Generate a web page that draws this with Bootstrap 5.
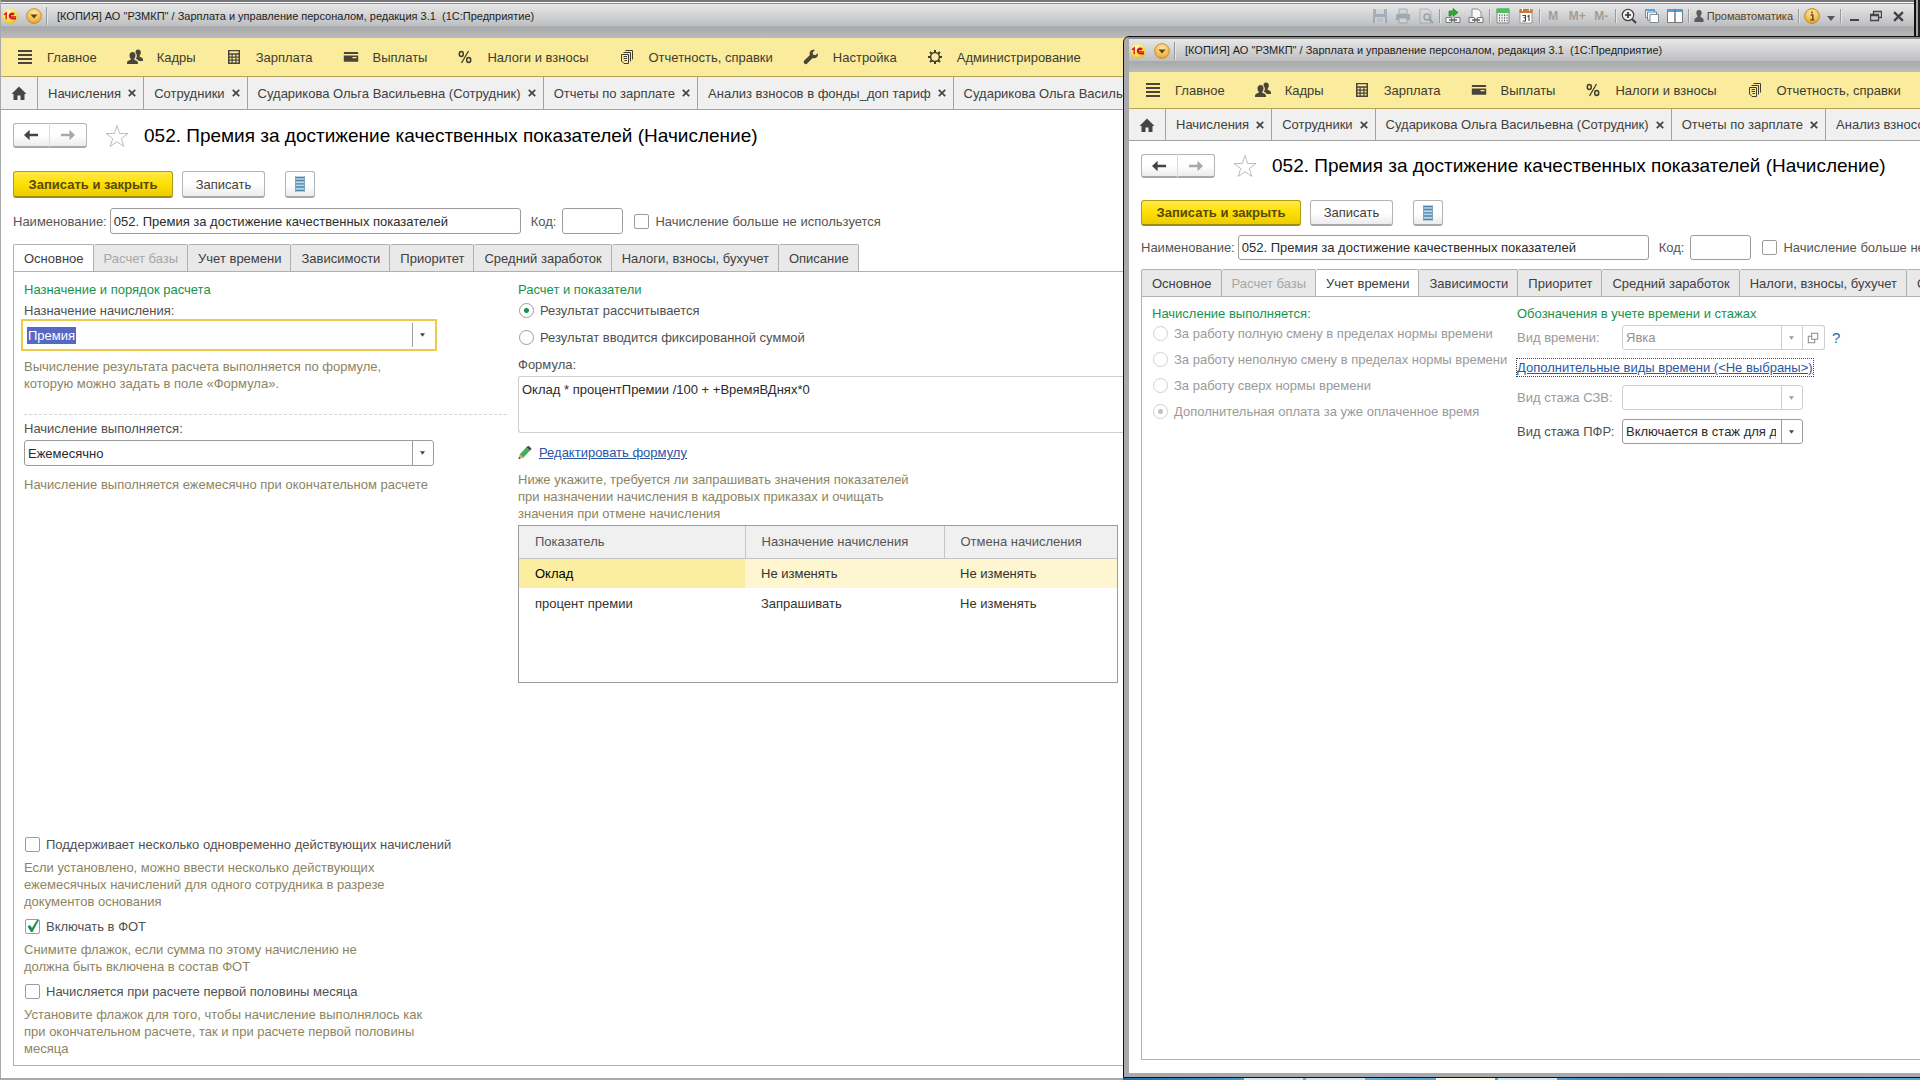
<!DOCTYPE html>
<html lang="ru">
<head>
<meta charset="utf-8">
<meta name="viewport" content="width=device-width, initial-scale=1">
<title>Зарплата и управление персоналом, редакция 3.1</title>
<link href="https://cdn.jsdelivr.net/npm/bootstrap@5.3.0/dist/css/bootstrap.min.css" rel="stylesheet">
<style>
  body { font-family: "Liberation Sans", Arial, sans-serif; font-size: 13px; line-height: 17px; color: #3c3c3c; background: #fff; }
  svg { display: block; flex: none; }

  /* Desktop and windows */
  .desk { min-height: 100vh; background: #77777b; overflow: hidden; }
  .win { --title-h: 34px; --menu-h: 39px; --tabs-h: 33px; --top-gap: 13px; --nav-h: 25px; --nav-gap: 23px; --btn-h: 27px; --field-h: 26px; --ftab-h: 28px; --field-gap: 10px; background: #fff; }
  .win-main { margin-right: 5px; min-height: 100vh; border: solid #a9a9a9; border-width: 0 0 2px 1px; }
  .win-front { --title-h: 33px; --menu-h: 37px; --tabs-h: 32px; --top-gap: 13px; --nav-h: 24px; --nav-gap: 22px; --btn-h: 26px; --field-h: 25px; --ftab-h: 28px; --field-gap: 9px; left: 1124px; top: 37px; right: 0; bottom: 3px; border: solid #a9a9ab; border-width: 2px 0 4px 5px; border-top-color: #8b8b8d; border-top-left-radius: 5px; outline: 1px solid #111; overflow: hidden; }
  .desk-rim { height: 4px; background: linear-gradient(#77777b 2px, #fff 2px, #fff 3px, #8b8b8d 3px); }
  .task-strip { left: 1123px; right: 0; bottom: 0; height: 3px; padding-left: 121px; gap: 3px; background: linear-gradient(90deg, #1f6da5, #6fb2d8 25%, #3f8cc0 65%, #5da5d0); }
  .task-strip i { width: 59px; background: linear-gradient(#333 1px, #cfe8f5 1px); }
  .task-strip i + i + i { margin-left: 68px; background: linear-gradient(#222 1px, #fdf9e0 1px); }
  .task-strip i + i + i + i { margin-left: 0; background: linear-gradient(#333 1px, #cfe8f5 1px); }
  .corner { right: 0; top: 0; width: 6px; height: 37px; background: linear-gradient(90deg, #111 2px, #a5a5a8 2px, #a5a5a8 4px, #222 4px); }

  .titlebar { height: var(--title-h); padding: 0 11px 10px 1px; font-size: 12px; color: #1d1d1d; background: linear-gradient(#e8e8e8, #bdbec0 22px, #adaeb0 22px, #a9aaac 70%, #bcbcbe); white-space: nowrap; }
  .titlebar .caption { font-size: 11px; margin-left: 10px; }
  .orb { width: 16px; height: 16px; border: 0; padding: 0; background: none; }
  .vline { width: 1px; height: 18px; background: #9b9b9d; box-shadow: 1px 0 #e4e4e4; }
  .tools { gap: 7px; }
  .tools .vline { margin: 0 -2px; height: 14px; }
  .tools button { border: 0; padding: 0; background: none; line-height: 16px; color: #4a4a4a; }
  .tools .faded { opacity: .55; }
  .tools .memo { width: 17px; font-size: 12px; font-weight: 700; color: #a99b90; }
  .tools .who { gap: 3px; font-size: 11px; color: #5a431f; }

  .menu { height: var(--menu-h); padding-left: 16px; gap: 30px; background: #faec9c; border-bottom: 1px solid #b3a455; }
  .menu a { gap: 14px; color: #403c30; text-decoration: none; white-space: nowrap; }

  .opened { height: var(--tabs-h); background: #f0f0f0; border-bottom: 1px solid #a3a3a3; overflow: hidden; }
  .opened > div { padding: 0 7px 0 10px; gap: 7px; border-right: 1px solid #a3a3a3; white-space: nowrap; flex: none; }
  .opened > .home { padding: 0 10px; }
  .opened a { color: #404040; text-decoration: none; }
  .opened button { border: 0; padding: 0; background: none; }

  .sheet { padding: var(--top-gap) 0 12px 12px; }
  .win-front .sheet { padding-bottom: 13px; }
  .navpair button, .act { border: 1px solid #b4b4b4; border-bottom: 2px solid #a8a8a8; border-radius: 3px; background: linear-gradient(#fff 50%, #ececec); color: #404040; padding: 0; }
  .navpair button { width: 37px; height: var(--nav-h); }
  .navpair button:first-child { border-radius: 3px 0 0 3px; border-right-color: #dcdcdc; }
  .navpair button:last-child { border-radius: 0 3px 3px 0; border-left: 0; }
  .sheet h1 { font-size: 19px; line-height: var(--nav-h); color: #000; font-weight: 400; white-space: nowrap; }
  .star { margin: 0 15px 0 18px; border: 0; padding: 0; background: none; }
  .acts { margin-top: var(--nav-gap); gap: 9px; }
  .act { height: var(--btn-h); width: 83px; }
  .act-main { width: 160px; font-weight: 700; color: #57490b; background: linear-gradient(#ffe94a, #ffe000 50%, #eccb00); border-color: #b39c15; border-bottom-color: #a08b12; }
  .act-list { width: 30px; margin-left: 11px; }

  .fields { margin: var(--field-gap) 0; height: var(--field-h); white-space: nowrap; }
  .box { border: 1px solid #9c9c9c; border-radius: 3px; height: var(--field-h); padding: 0 3px; color: #2b2b2b; background: #fff; flex: none; }
  .box-name { width: 411px; margin: 0 10px 0 3px; }
  .box-code { width: 61px; margin: 0 10px 0 6px; }
  .fields > label { color: #555; }

  .tick, .dot { appearance: none; width: 15px; height: 15px; margin: 0 6px 0 1px; border: 1px solid #9c9c9c; background: #fff; flex: none; }
  .tick { border-radius: 2px; }
  .dot { border-radius: 50%; }
  .dot:checked { background: radial-gradient(circle, #159250 2px, #fff 3px); }
  .dot:disabled { border-color: #d0d0d0; }
  .dot:disabled:checked { background: radial-gradient(circle, #c0c0c0 2px, #fff 3px); }
  .tick:checked { background: url("data:image/svg+xml,%3Csvg xmlns='http://www.w3.org/2000/svg' viewBox='0 0 13 13'%3E%3Cpath d='M1.500 6.500 4 5 6 8 11 0h2L6.500 12H5z' fill='%23159250'/%3E%3C/svg%3E") center / 13px 13px no-repeat; }
  .pick { height: 16px; color: #505050; white-space: nowrap; }
  .pick.off { color: #9a9a9a; }

  .formtabs { height: var(--ftab-h); margin-bottom: -1px; }
  .formtabs button { border: 1px solid #b0b0b0; border-left-width: 0; background: #e9e9e9; padding: 0 9px 0 10px; color: #404040; white-space: nowrap; border-radius: 2px 2px 0 0; flex: none; }
  .formtabs button:first-child { border-left-width: 1px; }
  .formtabs button:disabled { color: #a6a6a6; }
  .formtabs .now { background: #fff; border-bottom-color: #fff; }
  .pane { border: solid #b0b0b0; border-width: 1px 0 1px 1px; padding: 9px 0 8px 10px; }
  .win-front .pane { padding-top: 8px; }

  .sect { font-size: 13px; line-height: 17px; color: #16924f; font-weight: 400; margin: 0; }
  .tip { color: #8d8462; margin: 7px 0 0; }
  .cap { color: #505050; display: block; }
  .col-a { width: 483px; margin-right: 11px; flex: none; }
  .col-b { min-width: 0; }
  .col-time { width: 365px; flex: none; }
  .col-time .pick { margin-bottom: 10px; }
  .col-time .sect, .col-marks .sect { margin-bottom: 3px; }
  .col-marks .lnk { margin: 9px 0; white-space: nowrap; }
  .col-marks .side-row + .side-row { margin-top: 9px; }

  .combo { appearance: none; display: block; height: var(--field-h); border: 1px solid #9c9c9c; border-radius: 3px; padding: 0 26px 0 3px; color: #2b2b2b;
    background: url("data:image/svg+xml,%3Csvg xmlns='http://www.w3.org/2000/svg' viewBox='0 0 6 4'%3E%3Cpath d='M0 0h6L3 4z' fill='%23444'/%3E%3C/svg%3E") right 8px center / 5px 4px no-repeat, linear-gradient(#9c9c9c, #9c9c9c) right 20px center / 1px 100% no-repeat #fff; }
  .combo-wide { width: 410px; margin-top: 3px; }
  .combo-wide + .tip { margin-top: 10px; }
  .combo-lit { width: 416px; height: 32px; margin-left: -3px; border: 2px solid #eccb4b; border-radius: 0; color: #fff; padding-left: 5px;
    background: url("data:image/svg+xml,%3Csvg xmlns='http://www.w3.org/2000/svg' viewBox='0 0 6 4'%3E%3Cpath d='M0 0h6L3 4z' fill='%23444'/%3E%3C/svg%3E") right 10px center / 5px 4px no-repeat, linear-gradient(#9c9c9c, #9c9c9c) right 22px center / 1px 24px no-repeat, linear-gradient(#5468c4, #5468c4) 4px center / 49px 17px no-repeat #fff; }
  .combo-side { width: 181px; }
  .combo:disabled { border-color: #cfcfcf; color: #8f8f8f; opacity: 1;
    background: url("data:image/svg+xml,%3Csvg xmlns='http://www.w3.org/2000/svg' viewBox='0 0 6 4'%3E%3Cpath d='M0 0h6L3 4z' fill='%23999'/%3E%3C/svg%3E") right 8px center / 5px 4px no-repeat, linear-gradient(#cfcfcf, #cfcfcf) right 20px center / 1px 100% no-repeat #fff; }
  .combo-joined { border-radius: 3px 0 0 3px; }
  .opener { width: 22px; height: var(--field-h); border: 1px solid #cfcfcf; border-left: 0; border-radius: 0 3px 3px 0; background: #fff; padding: 0 4px; }
  .side-row { height: var(--field-h); }
  .side-row label { width: 105px; color: #505050; }
  .side-row label.off { color: #9a9a9a; }
  .help { margin-left: 7px; font-size: 15px; color: #1173b5; text-decoration: none; }
  .dash { height: 1px; margin: 22px 0 5px; background: repeating-linear-gradient(90deg, #d5d5d5 0 3px, transparent 3px 5px); }
  .spaced { margin: 11px 0; }
  .formula { display: block; width: 100%; height: 57px; margin-top: 3px; border: 1px solid #cfcfcf; border-right: 0; border-radius: 3px 0 0 3px; resize: none; padding: 4px 3px; color: #2b2b2b; }
  .edit-row { margin: 11px 0 10px; gap: 7px; }
  .edit-row + .tip { margin-top: 0; }
  .lnk { color: #2a56a5; }
  .lnk-focus { outline: 1px dotted #444; }

  .grid-frame { width: 600px; height: 158px; border: 1px solid #9c9c9c; margin-top: 3px; }
  .grid-frame table { width: 100%; table-layout: fixed; }
  .grid-frame th { height: 32px; padding: 0 0 0 16px; font-weight: 400; color: #555; background: #f0f0f0; border-bottom: 1px solid #c4c4c4; border-right: 1px solid #c4c4c4; }
  .grid-frame th:last-child { border-right: 0; }
  .grid-frame td { height: 30px; padding: 0 0 0 16px; color: #333; }
  .grid-frame .sel td { background: #fdf6d0; }
  .grid-frame .sel td:first-child { background: #fbeea0; color: #000; }
</style>
</head>
<body>
<svg width="0" height="0" class="position-absolute" aria-hidden="true">
  <defs>
    <radialGradient id="gy" cx=".4" cy=".3" r=".8"><stop offset="0" stop-color="#fffbd0"/><stop offset=".6" stop-color="#fbe04a"/><stop offset="1" stop-color="#e0b020"/></radialGradient>
    <radialGradient id="go" cx=".5" cy=".3" r=".8"><stop offset="0" stop-color="#ffe9a8"/><stop offset=".7" stop-color="#f3b340"/><stop offset="1" stop-color="#c98a20"/></radialGradient>
    <symbol id="i-1c" viewBox="0 0 16 16"><circle cx="8" cy="8" r="7.600" fill="url(#gy)"/><path d="M2 6.800 4.200 5v6.200M12.300 6.200A2.800 2.800 0 1 0 9.800 10.800H14M11.300 7.200A1.400 1.400 0 1 0 9.900 9H14" fill="none" stroke="#d01818" stroke-width="1.400"/></symbol>
    <symbol id="i-drop" viewBox="0 0 16 16"><circle cx="8" cy="8" r="7.400" fill="url(#go)" stroke="#b98632" stroke-width=".8"/><path d="M4.500 6.500h7L8 10.500z" fill="#5b4212"/></symbol>
    <symbol id="i-main" viewBox="0 0 16 16"><path d="M1 1h14v2H1zM1 5h14v2H1zM1 9h14v2H1zM1 13h14v2H1z"/></symbol>
    <symbol id="i-people" viewBox="0 0 16 16"><path d="M11 .5c1.800 0 2.800 1.300 2.800 3 0 1.500-.6 2.400-1.100 3v1.300c1.600.6 3.300 1 3.300 3V12h-4.300c-.5-1.200-1.700-1.700-2.900-2.200 1.300-1.300 1.600-4.600-.3-6.100C8.300 1.800 9.200.5 11 .5z"/><path d="M5.500 3c2 0 3 1.400 3 3.200S7.800 9.200 7.300 9.700v1.100c1.600.7 3.400 1 3.700 3V15H0v-1.200c.2-2 2-2.300 3.700-3V9.700C3.200 9.200 2.500 8 2.500 6.200 2.500 4.400 3.500 3 5.500 3z"/></symbol>
    <symbol id="i-calc" viewBox="0 0 16 16"><path fill-rule="evenodd" d="M2 1h12v14H2zM3.500 2.300v2h9v-2zM3.500 5.700v1.800h2V5.700zM6.700 5.700v1.800h2.600V5.700zM10.500 5.700v1.800h2V5.700zM3.500 8.700v1.800h2V8.700zM6.700 8.700v1.800h2.600V8.700zM10.500 8.700v1.800h2V8.700zM3.500 11.800v1.800h2v-1.800zM6.700 11.800v1.800h2.600v-1.800zM10.500 11.800v1.800h2v-1.800z"/></symbol>
    <symbol id="i-card" viewBox="0 0 16 16"><path fill-rule="evenodd" d="M1.500 3h13l.7.700V5H.8V3.700zM.8 6.500h14.400v6.300H.8zM9.500 8v1.200h4V8z"/></symbol>
    <symbol id="i-pct" viewBox="0 0 16 16"><path d="M11.500 2 4.500 14" fill="none" stroke="currentColor" stroke-width="1.300"/><ellipse cx="4.300" cy="5" rx="2" ry="2.500" fill="none" stroke="currentColor" stroke-width="1.500"/><ellipse cx="11.700" cy="11" rx="2" ry="2.500" fill="none" stroke="currentColor" stroke-width="1.500"/></symbol>
    <symbol id="i-docs" viewBox="0 0 16 16"><path d="M2.500 5.500h7v9H5l-2.500-2.500zM4.500 3.500h7v9M6.500 1.500h7v9M4.500 7.500H8M4.500 9.500H8M5.500 11.500H8" fill="none" stroke="currentColor"/></symbol>
    <symbol id="i-wrench" viewBox="0 0 16 16"><path d="M14.800 4.200 12.300 6.200 10 5.500l-.3-2.300L12 1C9.500 0 6.500 1.500 6.600 4.500c0 .7.200 1.200.3 1.600L1.300 11.600c-1 1-.6 2.300 0 3 .8.700 2 .8 2.900-.1l5.500-5.400c2.800 1 6-1.400 5.100-4.900z"/></symbol>
    <symbol id="i-gear" viewBox="0 0 16 16"><circle cx="8" cy="8" r="4.400" fill="none" stroke="currentColor" stroke-width="1.500"/><path d="M8 1v2.500M8 12.500V15M1 8h2.500M12.500 8H15M3 3l1.800 1.800M11.200 11.200 13 13M3 13l1.800-1.800M11.200 4.800 13 3" stroke="currentColor" stroke-width="2"/></symbol>
    <symbol id="i-home" viewBox="0 0 16 16"><path d="M8 1.500 15.500 9h-2v6h-4v-4.500h-3V15h-4V9h-2z"/></symbol>
    <symbol id="i-x" viewBox="0 0 8 8"><path d="m.8.8 6.400 6.400M7.200.8.8 7.200" stroke="#444" stroke-width="1.700"/></symbol>
    <symbol id="i-left" viewBox="0 0 16 12"><path d="M0 6 6 .5V4.700h9v2.600H6v4.200z"/></symbol>
    <symbol id="i-right" viewBox="0 0 16 12"><path d="M15 6 9 .5V4.700H0v2.600h9v4.200z"/></symbol>
    <symbol id="i-star" viewBox="0 0 24 24"><path d="m12 1.500 2.700 8H23l-6.700 5 2.500 8L12 17.700l-6.800 4.800 2.500-8L1 9.500h8.300z" fill="#fff" stroke="#bdbdbd"/></symbol>
    <symbol id="i-list" viewBox="0 0 12 16"><path d="M1 .5h10v15H1z" fill="#b8d5e8"/><path d="M1 1.500h10M1 4.500h10M1 7.800h10M1 11h10M1 14.500h10" stroke="#4f82a8" stroke-width="1.300"/><path d="M1.500 .5v15M10.500 .5v15" stroke="#7ea4c0"/></symbol>
    <symbol id="i-pencil" viewBox="0 0 16 16"><path d="M.5 15.500 2 10l4 4z" fill="#d9a95a"/><path d="M2 10 9.500 2l4 4L6 14z" fill="#4bab5a"/><path d="M9.500 2 11 .8q1-.7 1.800 0L15 3q.8.800 0 1.700L13.500 6z" fill="#4a4a55"/><path d="m.5 15.500.7-2.500 1.800 1.800z" fill="#443311"/></symbol>
    <symbol id="i-open" viewBox="0 0 14 14"><path d="M5.500 1.500h7v7h-7zM5 5H1.500v7.500H9V9" fill="none" stroke="#8c8c8c" stroke-width="1.200"/></symbol>
    <symbol id="t-save" viewBox="0 0 16 16"><path d="M1 1h14v14H1z" fill="#7d92a3"/><path d="M4 1h8v5H4zM3 9h10v6H3z" fill="#cbd2d8"/><path d="M5 11h6M5 13h6" stroke="#8fa0ae"/></symbol>
    <symbol id="t-print" viewBox="0 0 16 16"><path d="M4 1h8v5H4z" fill="#cfd4d8" stroke="#7b8a96"/><path d="M1 6h14v6H1z" fill="#7b8a96"/><path d="M4 10h8v5H4z" fill="#dadee1" stroke="#7b8a96"/></symbol>
    <symbol id="t-view" viewBox="0 0 16 16"><path d="M2 1h8l3 3v11H2z" fill="#d3d7da" stroke="#88959e"/><circle cx="9" cy="9" r="3" fill="#c2d0da" stroke="#6a7c8a" stroke-width="1.500"/><path d="m11 11 4 4" stroke="#6a7c8a" stroke-width="2"/></symbol>
    <symbol id="t-link" viewBox="0 0 16 16"><path d="M1 9.500h5.500v5H1zM9.500 9.500H15v5H9.500z" fill="#f5f5f5" stroke="#7b7b7b"/><path d="M4 12h8" stroke="#666" stroke-width="1.500"/><path d="M4 3h4V.5l5 4-5 4V6.200H6V8H4z" fill="#2cab35" stroke="#14761c" stroke-width=".6"/></symbol>
    <symbol id="t-page" viewBox="0 0 16 16"><path d="M4 1h6l3 3v7H4z" fill="#fafafa" stroke="#8a8a8a"/><path d="M1 9.500h5.500v5H1zM9.500 9.500H15v5H9.500z" fill="#f5f5f5" stroke="#7b7b7b"/><path d="M4 12h8" stroke="#666" stroke-width="1.500"/></symbol>
    <symbol id="t-calc" viewBox="0 0 16 16"><path d="M2 1h12v14H2z" fill="#f1f1f1" stroke="#888"/><path d="M1.500 .5h13V5h-13z" fill="#4cc05e"/><path d="M4.500 6.500v8M7 6.500v8M9.500 6.500v8M12 6.500v8" stroke="#666" stroke-dasharray="1.600 1"/></symbol>
    <symbol id="t-cal" viewBox="0 0 16 16"><path d="M2 2h12v13H2z" fill="#fff" stroke="#999"/><path d="M1.500 1h13v4h-13z" fill="#c67a41"/><path d="M4.500 0v3M11.500 0v3" stroke="#fff"/><path d="M4.500 7.500h3v2.300h-2 2V13h-3M9.500 8.500 11 7.500V13" fill="none" stroke="#444" stroke-width="1.100"/></symbol>
    <symbol id="t-zoom" viewBox="0 0 16 16"><circle cx="7" cy="7" r="5.700" fill="#eee" stroke="#444" stroke-width="1.200"/><path d="M4 7h6M7 4v6" stroke="#333" stroke-width="1.700"/><path d="m11 11 4 4" stroke="#444" stroke-width="2.200"/></symbol>
    <symbol id="t-wins" viewBox="0 0 16 16"><path d="M1.500 1.500h9v8h-9z" fill="#f8f8f8" stroke="#4d90c4"/><path d="M3.500 4h9v8h-9z" fill="#f8f8f8" stroke="#4d90c4"/><path d="M6 6.500h8.500v8H6z" fill="#fff" stroke="#888"/><path d="M1 2h10" stroke="#58a2d8" stroke-width="2"/></symbol>
    <symbol id="t-cols" viewBox="0 0 16 16"><path d="M.5 1.500h15v13H.5z" fill="#fff" stroke="#777"/><path d="M.5 2.500h15" stroke="#4aa0e0" stroke-width="3"/><path d="M8 1v14" stroke="#777" stroke-width="1.500"/></symbol>
    <symbol id="t-man" viewBox="0 0 10 14"><path d="M5 1C7.500 1 8 3 7.500 5L6.300 7.500 9.500 10v3H.5v-3l3.200-2.500L2.500 5C2 3 2.500 1 5 1z" fill="#5b5b5b"/></symbol>
    <symbol id="t-info" viewBox="0 0 16 16"><circle cx="8" cy="8" r="7.400" fill="url(#go)" stroke="#c08a28"/><path d="M6.500 7h2.300v5M6.300 12h4M8 3.500v2" fill="none" stroke="#6b5520" stroke-width="1.700"/></symbol>
  </defs>
</svg>

<div class="desk position-relative">
  <main class="win win-main d-flex flex-column">
    <div class="desk-rim"></div>
    <header class="titlebar d-flex align-items-center">
      <button class="orb" aria-label="1С"><svg width="16" height="16"><use href="#i-1c"/></svg></button>
      <button class="orb ms-2" aria-label="Сервис"><svg width="16" height="16"><use href="#i-drop"/></svg></button>
      <span class="vline ms-1"></span>
      <span class="caption">[КОПИЯ] АО "РЗМКП" / Зарплата и управление персоналом, редакция 3.1&nbsp; (1С:Предприятие)</span>
      <div class="tools d-flex align-items-center ms-auto">
        <button class="faded" aria-label="Сохранить"><svg width="16" height="16"><use href="#t-save"/></svg></button>
        <button class="faded" aria-label="Печать"><svg width="16" height="16"><use href="#t-print"/></svg></button>
        <button class="faded" aria-label="Просмотр"><svg width="16" height="16"><use href="#t-view"/></svg></button>
        <span class="vline"></span>
        <button aria-label="Получить ссылку"><svg width="16" height="16"><use href="#t-link"/></svg></button>
        <button aria-label="Перейти по ссылке"><svg width="16" height="16"><use href="#t-page"/></svg></button>
        <span class="vline"></span>
        <button aria-label="Калькулятор"><svg width="16" height="16"><use href="#t-calc"/></svg></button>
        <button aria-label="Календарь"><svg width="16" height="16"><use href="#t-cal"/></svg></button>
        <span class="vline"></span>
        <button class="memo">M</button>
        <button class="memo">M+</button>
        <button class="memo">M-</button>
        <span class="vline"></span>
        <button aria-label="Масштаб"><svg width="16" height="16"><use href="#t-zoom"/></svg></button>
        <button aria-label="Окна"><svg width="16" height="16"><use href="#t-wins"/></svg></button>
        <button aria-label="Панели"><svg width="16" height="16"><use href="#t-cols"/></svg></button>
        <span class="vline"></span>
        <button class="who d-flex align-items-center"><svg width="10" height="14"><use href="#t-man"/></svg>Промавтоматика</button>
        <span class="vline"></span>
        <button aria-label="Справка"><svg width="16" height="16"><use href="#t-info"/></svg></button>
        <button aria-label="Ещё"><svg width="8" height="12" viewBox="0 0 8 12"><path d="M0 6h8L4 11z" fill="#555"/></svg></button>
        <span class="vline"></span>
        <button class="ms-1" aria-label="Свернуть"><svg width="9" height="12" viewBox="0 0 9 12"><path d="M0 9h9v2H0z" fill="#444"/></svg></button>
        <button class="ms-1" aria-label="Восстановить"><svg width="12" height="12" viewBox="0 0 12 12"><path d="M3.500 4V1.500h8v6H9M.5 4.500h8v6h-8zM.5 5.500h8" fill="none" stroke="#444" stroke-width="1.300"/></svg></button>
        <button class="ms-1" aria-label="Закрыть"><svg width="11" height="11"><use href="#i-x"/></svg></button>
      </div>
    </header>

    <nav class="menu d-flex align-items-center">
      <a href="#" class="d-flex align-items-center"><svg width="16" height="16" fill="#4a4538"><use href="#i-main"/></svg>Главное</a>
      <a href="#" class="d-flex align-items-center"><svg width="16" height="16" fill="#4a4538"><use href="#i-people"/></svg>Кадры</a>
      <a href="#" class="d-flex align-items-center"><svg width="16" height="16" fill="#4a4538"><use href="#i-calc"/></svg>Зарплата</a>
      <a href="#" class="d-flex align-items-center"><svg width="16" height="16" fill="#4a4538"><use href="#i-card"/></svg>Выплаты</a>
      <a href="#" class="d-flex align-items-center"><svg width="16" height="16"><use href="#i-pct"/></svg>Налоги и взносы</a>
      <a href="#" class="d-flex align-items-center"><svg width="16" height="16"><use href="#i-docs"/></svg>Отчетность, справки</a>
      <a href="#" class="d-flex align-items-center"><svg width="16" height="16" fill="#4a4538"><use href="#i-wrench"/></svg>Настройка</a>
      <a href="#" class="d-flex align-items-center"><svg width="16" height="16"><use href="#i-gear"/></svg>Администрирование</a>
    </nav>

    <div class="opened d-flex">
      <div class="home d-flex align-items-center"><a href="#" aria-label="Начальная страница"><svg width="16" height="16" fill="#444"><use href="#i-home"/></svg></a></div>
      <div class="d-flex align-items-center"><a href="#">Начисления</a><button aria-label="Закрыть"><svg width="8" height="8"><use href="#i-x"/></svg></button></div>
      <div class="d-flex align-items-center"><a href="#">Сотрудники</a><button aria-label="Закрыть"><svg width="8" height="8"><use href="#i-x"/></svg></button></div>
      <div class="d-flex align-items-center"><a href="#">Сударикова Ольга Васильевна (Сотрудник)</a><button aria-label="Закрыть"><svg width="8" height="8"><use href="#i-x"/></svg></button></div>
      <div class="d-flex align-items-center"><a href="#">Отчеты по зарплате</a><button aria-label="Закрыть"><svg width="8" height="8"><use href="#i-x"/></svg></button></div>
      <div class="d-flex align-items-center"><a href="#">Анализ взносов в фонды_доп тариф</a><button aria-label="Закрыть"><svg width="8" height="8"><use href="#i-x"/></svg></button></div>
      <div class="d-flex align-items-center"><a href="#">Сударикова Ольга Васильевна</a></div>
    </div>

    <section class="sheet d-flex flex-column flex-grow-1">
      <div class="d-flex align-items-center">
        <div class="navpair d-flex">
          <button aria-label="Назад"><svg class="mx-auto" width="15" height="12" fill="#444"><use href="#i-left"/></svg></button>
          <button aria-label="Вперед"><svg class="mx-auto" width="15" height="12" fill="#a8a8a8"><use href="#i-right"/></svg></button>
        </div>
        <button class="star" aria-label="В избранное"><svg width="24" height="24"><use href="#i-star"/></svg></button>
        <h1 class="m-0">052. Премия за достижение качественных показателей (Начисление)</h1>
      </div>
      <div class="acts d-flex">
        <button class="act act-main">Записать и закрыть</button>
        <button class="act">Записать</button>
        <button class="act act-list" aria-label="Список"><svg class="mx-auto" width="12" height="16"><use href="#i-list"/></svg></button>
      </div>
      <div class="fields d-flex align-items-center">
        <label for="name1">Наименование:</label>
        <input class="box box-name" id="name1" type="text" value="052. Премия за достижение качественных показателей">
        <label for="code1">Код:</label>
        <input class="box box-code" id="code1" type="text">
        <input class="tick" id="unused1" type="checkbox"><label for="unused1">Начисление больше не используется</label>
      </div>
      <div class="formtabs d-flex">
        <button class="now">Основное</button><button disabled>Расчет базы</button><button>Учет времени</button><button>Зависимости</button><button>Приоритет</button><button>Средний заработок</button><button>Налоги, взносы, бухучет</button><button>Описание</button>
      </div>
      <div class="pane d-flex flex-grow-1">
        <div class="col-a d-flex flex-column">
          <h2 class="sect">Назначение и порядок расчета</h2>
          <label class="cap mt-1" for="purpose">Назначение начисления:</label>
          <select class="combo combo-lit" id="purpose"><option>Премия</option></select>
          <p class="tip">Вычисление результата расчета выполняется по формуле,<br>которую можно задать в поле «Формула».</p>
          <div class="dash"></div>
          <label class="cap" for="period">Начисление выполняется:</label>
          <select class="combo combo-wide" id="period"><option>Ежемесячно</option></select>
          <p class="tip">Начисление выполняется ежемесячно при окончательном расчете</p>
          <div class="mt-auto">
            <div class="pick d-flex align-items-center"><input class="tick" id="multi" type="checkbox"><label for="multi">Поддерживает несколько одновременно действующих начислений</label></div>
            <p class="tip">Если установлено, можно ввести несколько действующих<br>ежемесячных начислений для одного сотрудника в разрезе<br>документов основания</p>
            <div class="pick d-flex align-items-center mt-2"><input class="tick" id="fot" type="checkbox" checked><label for="fot">Включать в ФОТ</label></div>
            <p class="tip">Снимите флажок, если сумма по этому начислению не<br>должна быть включена в состав ФОТ</p>
            <div class="pick d-flex align-items-center mt-2"><input class="tick" id="half" type="checkbox"><label for="half">Начисляется при расчете первой половины месяца</label></div>
            <p class="tip">Установите флажок для того, чтобы начисление выполнялось как<br>при окончательном расчете, так и при расчете первой половины<br>месяца</p>
          </div>
        </div>
        <div class="col-b flex-grow-1">
          <h2 class="sect">Расчет и показатели</h2>
          <div class="pick d-flex align-items-center mt-1"><input class="dot" id="calc" name="res" type="radio" checked><label for="calc">Результат рассчитывается</label></div>
          <div class="pick spaced d-flex align-items-center"><input class="dot" id="fixed" name="res" type="radio"><label for="fixed">Результат вводится фиксированной суммой</label></div>
          <label class="cap" for="formula">Формула:</label>
          <textarea class="formula" id="formula">Оклад * процентПремии /100 + +ВремяВДнях*0</textarea>
          <div class="edit-row d-flex align-items-center"><svg width="14" height="15"><use href="#i-pencil"/></svg><a class="lnk" href="#">Редактировать формулу</a></div>
          <p class="tip">Ниже укажите, требуется ли запрашивать значения показателей<br>при назначении начисления в кадровых приказах и очищать<br>значения при отмене начисления</p>
          <div class="grid-frame">
            <table>
              <colgroup><col style="width:226px"><col style="width:199px"><col></colgroup>
              <thead><tr><th>Показатель</th><th>Назначение начисления</th><th>Отмена начисления</th></tr></thead>
              <tbody>
                <tr class="sel"><td>Оклад</td><td>Не изменять</td><td>Не изменять</td></tr>
                <tr><td>процент премии</td><td>Запрашивать</td><td>Не изменять</td></tr>
              </tbody>
            </table>
          </div>
        </div>
      </div>
    </section>
  </main>

  <div class="corner position-absolute"></div>
  <div class="task-strip position-absolute d-flex"><i></i><i></i><i></i><i></i></div>

  <aside class="win win-front position-absolute d-flex flex-column">
    <header class="titlebar d-flex align-items-center">
      <button class="orb" aria-label="1С"><svg width="16" height="16"><use href="#i-1c"/></svg></button>
      <button class="orb ms-2" aria-label="Сервис"><svg width="16" height="16"><use href="#i-drop"/></svg></button>
      <span class="vline ms-1"></span>
      <span class="caption">[КОПИЯ] АО "РЗМКП" / Зарплата и управление персоналом, редакция 3.1&nbsp; (1С:Предприятие)</span>
    </header>

    <nav class="menu d-flex align-items-center">
      <a href="#" class="d-flex align-items-center"><svg width="16" height="16" fill="#4a4538"><use href="#i-main"/></svg>Главное</a>
      <a href="#" class="d-flex align-items-center"><svg width="16" height="16" fill="#4a4538"><use href="#i-people"/></svg>Кадры</a>
      <a href="#" class="d-flex align-items-center"><svg width="16" height="16" fill="#4a4538"><use href="#i-calc"/></svg>Зарплата</a>
      <a href="#" class="d-flex align-items-center"><svg width="16" height="16" fill="#4a4538"><use href="#i-card"/></svg>Выплаты</a>
      <a href="#" class="d-flex align-items-center"><svg width="16" height="16"><use href="#i-pct"/></svg>Налоги и взносы</a>
      <a href="#" class="d-flex align-items-center"><svg width="16" height="16"><use href="#i-docs"/></svg>Отчетность, справки</a>
    </nav>

    <div class="opened d-flex">
      <div class="home d-flex align-items-center"><a href="#" aria-label="Начальная страница"><svg width="16" height="16" fill="#444"><use href="#i-home"/></svg></a></div>
      <div class="d-flex align-items-center"><a href="#">Начисления</a><button aria-label="Закрыть"><svg width="8" height="8"><use href="#i-x"/></svg></button></div>
      <div class="d-flex align-items-center"><a href="#">Сотрудники</a><button aria-label="Закрыть"><svg width="8" height="8"><use href="#i-x"/></svg></button></div>
      <div class="d-flex align-items-center"><a href="#">Сударикова Ольга Васильевна (Сотрудник)</a><button aria-label="Закрыть"><svg width="8" height="8"><use href="#i-x"/></svg></button></div>
      <div class="d-flex align-items-center"><a href="#">Отчеты по зарплате</a><button aria-label="Закрыть"><svg width="8" height="8"><use href="#i-x"/></svg></button></div>
      <div class="d-flex align-items-center"><a href="#">Анализ взносов</a></div>
    </div>

    <section class="sheet d-flex flex-column flex-grow-1">
      <div class="d-flex align-items-center">
        <div class="navpair d-flex">
          <button aria-label="Назад"><svg class="mx-auto" width="15" height="12" fill="#444"><use href="#i-left"/></svg></button>
          <button aria-label="Вперед"><svg class="mx-auto" width="15" height="12" fill="#a8a8a8"><use href="#i-right"/></svg></button>
        </div>
        <button class="star" aria-label="В избранное"><svg width="24" height="24"><use href="#i-star"/></svg></button>
        <h1 class="m-0">052. Премия за достижение качественных показателей (Начисление)</h1>
      </div>
      <div class="acts d-flex">
        <button class="act act-main">Записать и закрыть</button>
        <button class="act">Записать</button>
        <button class="act act-list" aria-label="Список"><svg class="mx-auto" width="12" height="16"><use href="#i-list"/></svg></button>
      </div>
      <div class="fields d-flex align-items-center">
        <label for="name2">Наименование:</label>
        <input class="box box-name" id="name2" type="text" value="052. Премия за достижение качественных показателей">
        <label for="code2">Код:</label>
        <input class="box box-code" id="code2" type="text">
        <input class="tick" id="unused2" type="checkbox"><label for="unused2">Начисление больше не</label>
      </div>
      <div class="formtabs d-flex">
        <button>Основное</button><button disabled>Расчет базы</button><button class="now">Учет времени</button><button>Зависимости</button><button>Приоритет</button><button>Средний заработок</button><button>Налоги, взносы, бухучет</button><button>Описание</button>
      </div>
      <div class="pane d-flex flex-grow-1">
        <div class="col-time">
          <h2 class="sect">Начисление выполняется:</h2>
          <div class="pick off d-flex align-items-center"><input class="dot" id="w1" name="work" type="radio" disabled><label for="w1">За работу полную смену в пределах нормы времени</label></div>
          <div class="pick off d-flex align-items-center"><input class="dot" id="w2" name="work" type="radio" disabled><label for="w2">За работу неполную смену в пределах нормы времени</label></div>
          <div class="pick off d-flex align-items-center"><input class="dot" id="w3" name="work" type="radio" disabled><label for="w3">За работу сверх нормы времени</label></div>
          <div class="pick off d-flex align-items-center"><input class="dot" id="w4" name="work" type="radio" disabled checked><label for="w4">Дополнительная оплата за уже оплаченное время</label></div>
        </div>
        <div class="col-marks d-flex flex-column">
          <h2 class="sect">Обозначения в учете времени и стажах</h2>
          <div class="side-row d-flex align-items-center"><label class="off" for="kind">Вид времени:</label><select class="combo combo-side combo-joined" id="kind" disabled><option>Явка</option></select><button class="opener" aria-label="Открыть" disabled><svg width="12" height="12"><use href="#i-open"/></svg></button><a class="help" href="#">?</a></div>
          <div class="d-flex"><a class="lnk lnk-focus" href="#">Дополнительные виды времени (&lt;Не выбраны&gt;)</a></div>
          <div class="side-row d-flex align-items-center"><label class="off" for="szv">Вид стажа СЗВ:</label><select class="combo combo-side" id="szv" disabled><option></option></select></div>
          <div class="side-row d-flex align-items-center"><label for="pfr">Вид стажа ПФР:</label><select class="combo combo-side" id="pfr"><option>Включается в стаж для досрочного назначения</option></select></div>
        </div>
      </div>
    </section>
  </aside>
</div>
<script src="https://cdn.jsdelivr.net/npm/bootstrap@5.3.0/dist/js/bootstrap.bundle.min.js"></script>
</body>
</html>
